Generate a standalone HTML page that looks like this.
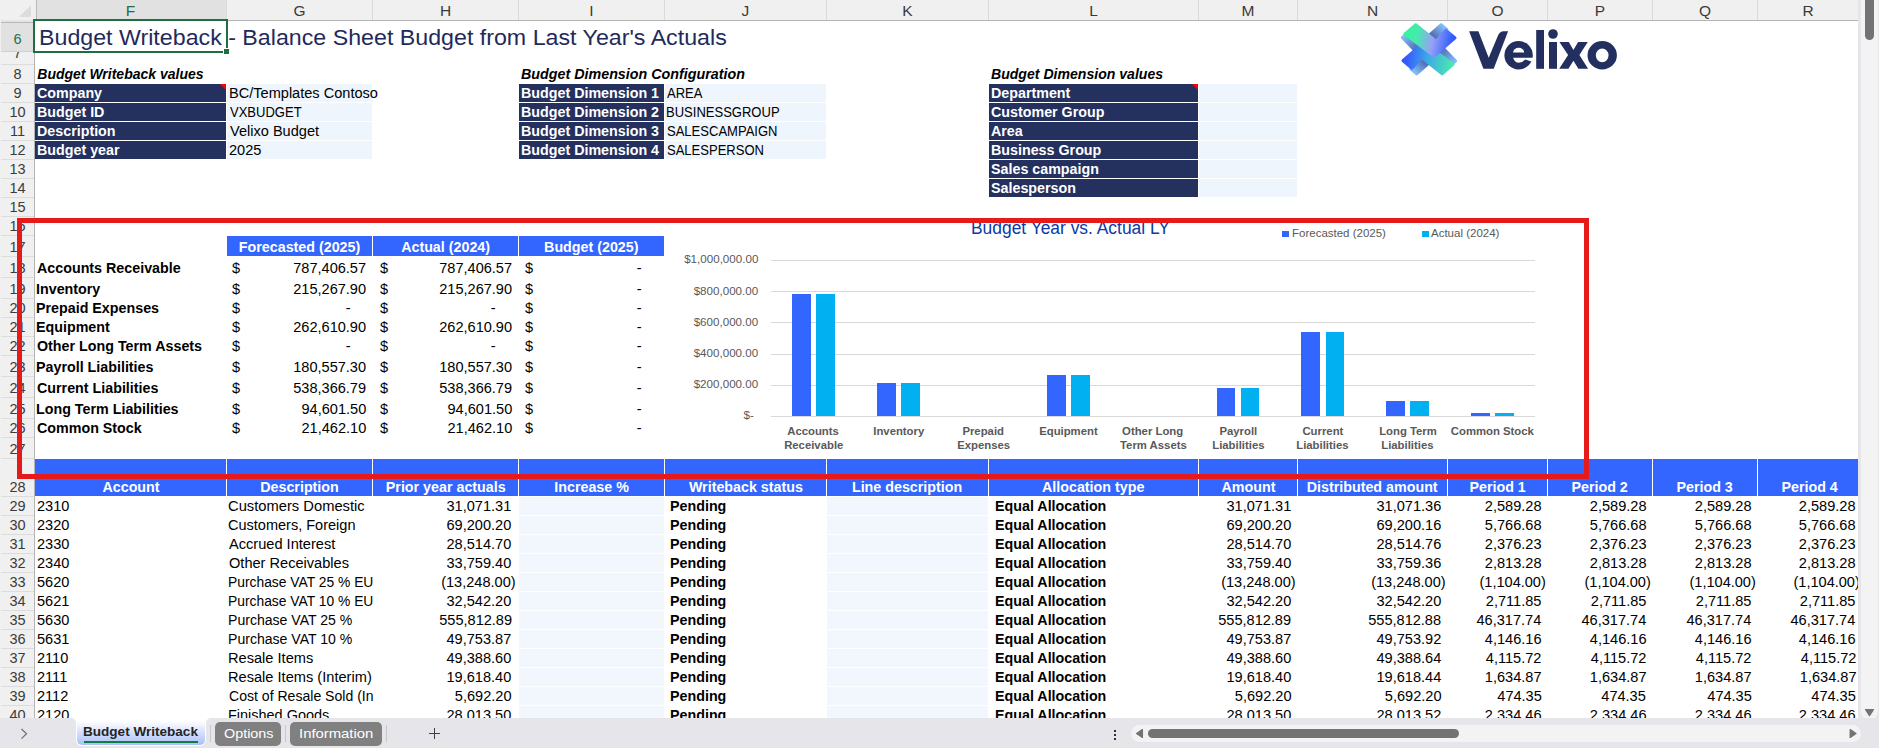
<!DOCTYPE html>
<html><head><meta charset="utf-8"><style>
html,body{margin:0;padding:0;}
body{width:1879px;height:748px;overflow:hidden;position:relative;background:#fff;font-family:"Liberation Sans",sans-serif;}
body div,body svg{position:absolute;white-space:pre;box-sizing:content-box;}
</style></head><body>
<div style="left:38.74px;top:25.70px;font-size:22.8px;line-height:22.8px;color:#1f2a5c;transform:scaleX(1.0180);transform-origin:left;">Budget Writeback - Balance Sheet Budget from Last Year's Actuals</div>
<div style="left:37.29px;top:66.95px;font-size:14px;line-height:14px;color:#000;font-weight:bold;font-style:italic;">Budget Writeback values</div>
<div style="left:521.19px;top:66.95px;font-size:14px;line-height:14px;color:#000;font-weight:bold;font-style:italic;transform:scaleX(1.0209);transform-origin:left;">Budget Dimension Configuration</div>
<div style="left:991.39px;top:66.95px;font-size:14px;line-height:14px;color:#000;font-weight:bold;font-style:italic;transform:scaleX(1.0056);transform-origin:left;">Budget Dimension values</div>
<div style="left:35px;top:84px;width:191px;height:18px;background:#24305e;"></div>
<div style="left:227px;top:84px;width:145px;height:18px;background:#eef5fd;"></div>
<div style="left:37.13px;top:85.95px;font-size:14px;line-height:14px;color:#fff;font-weight:bold;transform:scaleX(1.0200);transform-origin:left;">Company</div>
<div style="left:228.64px;top:85.95px;font-size:14px;line-height:14px;color:#000;transform:scaleX(1.0400);transform-origin:left;">BC/Templates Contoso</div>
<div style="left:35px;top:103px;width:191px;height:18px;background:#24305e;"></div>
<div style="left:227px;top:103px;width:145px;height:18px;background:#eef5fd;"></div>
<div style="left:36.77px;top:104.95px;font-size:14px;line-height:14px;color:#fff;font-weight:bold;transform:scaleX(1.0200);transform-origin:left;">Budget ID</div>
<div style="left:229.73px;top:104.95px;font-size:14px;line-height:14px;color:#000;transform:scaleX(0.9300);transform-origin:left;">VXBUDGET</div>
<div style="left:35px;top:122px;width:191px;height:18px;background:#24305e;"></div>
<div style="left:227px;top:122px;width:145px;height:18px;background:#eef5fd;"></div>
<div style="left:36.77px;top:123.95px;font-size:14px;line-height:14px;color:#fff;font-weight:bold;transform:scaleX(1.0200);transform-origin:left;">Description</div>
<div style="left:229.73px;top:123.95px;font-size:14px;line-height:14px;color:#000;transform:scaleX(1.0400);transform-origin:left;">Velixo Budget</div>
<div style="left:35px;top:141px;width:191px;height:18px;background:#24305e;"></div>
<div style="left:227px;top:141px;width:145px;height:18px;background:#eef5fd;"></div>
<div style="left:36.77px;top:142.95px;font-size:14px;line-height:14px;color:#fff;font-weight:bold;transform:scaleX(1.0200);transform-origin:left;">Budget year</div>
<div style="left:229.07px;top:142.95px;font-size:14px;line-height:14px;color:#000;transform:scaleX(1.0400);transform-origin:left;">2025</div>
<div style="left:519px;top:84px;width:145px;height:18px;background:#24305e;"></div>
<div style="left:665px;top:84px;width:161px;height:18px;background:#eef5fd;"></div>
<div style="left:521.07px;top:85.95px;font-size:14px;line-height:14px;color:#fff;font-weight:bold;transform:scaleX(1.0200);transform-origin:left;">Budget Dimension 1</div>
<div style="left:667.20px;top:85.95px;font-size:14px;line-height:14px;color:#000;transform:scaleX(0.9300);transform-origin:left;">AREA</div>
<div style="left:519px;top:103px;width:145px;height:18px;background:#24305e;"></div>
<div style="left:665px;top:103px;width:161px;height:18px;background:#eef5fd;"></div>
<div style="left:521.07px;top:104.95px;font-size:14px;line-height:14px;color:#fff;font-weight:bold;transform:scaleX(1.0200);transform-origin:left;">Budget Dimension 2</div>
<div style="left:666.16px;top:104.95px;font-size:14px;line-height:14px;color:#000;transform:scaleX(0.9300);transform-origin:left;">BUSINESSGROUP</div>
<div style="left:519px;top:122px;width:145px;height:18px;background:#24305e;"></div>
<div style="left:665px;top:122px;width:161px;height:18px;background:#eef5fd;"></div>
<div style="left:521.07px;top:123.95px;font-size:14px;line-height:14px;color:#fff;font-weight:bold;transform:scaleX(1.0200);transform-origin:left;">Budget Dimension 3</div>
<div style="left:666.61px;top:123.95px;font-size:14px;line-height:14px;color:#000;transform:scaleX(0.9300);transform-origin:left;">SALESCAMPAIGN</div>
<div style="left:519px;top:141px;width:145px;height:18px;background:#24305e;"></div>
<div style="left:665px;top:141px;width:161px;height:18px;background:#eef5fd;"></div>
<div style="left:521.07px;top:142.95px;font-size:14px;line-height:14px;color:#fff;font-weight:bold;transform:scaleX(1.0200);transform-origin:left;">Budget Dimension 4</div>
<div style="left:666.61px;top:142.95px;font-size:14px;line-height:14px;color:#000;transform:scaleX(0.9300);transform-origin:left;">SALESPERSON</div>
<div style="left:989px;top:84px;width:209px;height:18px;background:#24305e;"></div>
<div style="left:1199px;top:84px;width:98px;height:18px;background:#eef5fd;"></div>
<div style="left:990.57px;top:85.95px;font-size:14px;line-height:14px;color:#fff;font-weight:bold;transform:scaleX(1.0200);transform-origin:left;">Department</div>
<div style="left:989px;top:103px;width:209px;height:18px;background:#24305e;"></div>
<div style="left:1199px;top:103px;width:98px;height:18px;background:#eef5fd;"></div>
<div style="left:990.93px;top:104.95px;font-size:14px;line-height:14px;color:#fff;font-weight:bold;transform:scaleX(1.0200);transform-origin:left;">Customer Group</div>
<div style="left:989px;top:122px;width:209px;height:18px;background:#24305e;"></div>
<div style="left:1199px;top:122px;width:98px;height:18px;background:#eef5fd;"></div>
<div style="left:991.14px;top:123.95px;font-size:14px;line-height:14px;color:#fff;font-weight:bold;transform:scaleX(1.0200);transform-origin:left;">Area</div>
<div style="left:989px;top:141px;width:209px;height:18px;background:#24305e;"></div>
<div style="left:1199px;top:141px;width:98px;height:18px;background:#eef5fd;"></div>
<div style="left:990.57px;top:142.95px;font-size:14px;line-height:14px;color:#fff;font-weight:bold;transform:scaleX(1.0200);transform-origin:left;">Business Group</div>
<div style="left:989px;top:160px;width:209px;height:18px;background:#24305e;"></div>
<div style="left:1199px;top:160px;width:98px;height:18px;background:#eef5fd;"></div>
<div style="left:991.07px;top:161.95px;font-size:14px;line-height:14px;color:#fff;font-weight:bold;transform:scaleX(1.0200);transform-origin:left;">Sales campaign</div>
<div style="left:989px;top:179px;width:209px;height:18px;background:#24305e;"></div>
<div style="left:1199px;top:179px;width:98px;height:18px;background:#eef5fd;"></div>
<div style="left:991.07px;top:180.95px;font-size:14px;line-height:14px;color:#fff;font-weight:bold;transform:scaleX(1.0200);transform-origin:left;">Salesperson</div>
<div style="left:220px;top:84px;width:0;height:0;border-top:6px solid #ff0000;border-left:6px solid transparent"></div>
<div style="left:1192px;top:84px;width:0;height:0;border-top:6px solid #ff0000;border-left:6px solid transparent"></div>
<div style="left:227px;top:236px;width:145px;height:20px;background:#3366ff;"></div>
<div style="left:239.97px;top:239.95px;font-size:14px;line-height:14px;color:#fff;font-weight:bold;transform:scaleX(1.0200);transform-origin:center;">Forecasted (2025)</div>
<div style="left:373px;top:236px;width:145px;height:20px;background:#3366ff;"></div>
<div style="left:401.93px;top:239.95px;font-size:14px;line-height:14px;color:#fff;font-weight:bold;transform:scaleX(1.0200);transform-origin:center;">Actual (2024)</div>
<div style="left:519px;top:236px;width:145px;height:20px;background:#3366ff;"></div>
<div style="left:545.21px;top:239.95px;font-size:14px;line-height:14px;color:#fff;font-weight:bold;transform:scaleX(1.0200);transform-origin:center;">Budget (2025)</div>
<div style="left:36.94px;top:260.95px;font-size:14px;line-height:14px;color:#000;font-weight:bold;transform:scaleX(1.0200);transform-origin:left;">Accounts Receivable</div>
<div style="left:232.45px;top:260.95px;font-size:14px;line-height:14px;color:#000;transform:scaleX(1.0400);transform-origin:left;">$</div>
<div style="left:296.26px;top:260.95px;font-size:14px;line-height:14px;color:#000;transform:scaleX(1.0400);transform-origin:right;">787,406.57</div>
<div style="left:379.85px;top:260.95px;font-size:14px;line-height:14px;color:#000;transform:scaleX(1.0400);transform-origin:left;">$</div>
<div style="left:442.16px;top:260.95px;font-size:14px;line-height:14px;color:#000;transform:scaleX(1.0400);transform-origin:right;">787,406.57</div>
<div style="left:525.15px;top:260.95px;font-size:14px;line-height:14px;color:#000;transform:scaleX(1.0400);transform-origin:left;">$</div>
<div style="left:637.46px;top:260.95px;font-size:14px;line-height:14px;color:#000;transform:scaleX(1.0400);transform-origin:right;">-</div>
<div style="left:36.37px;top:281.95px;font-size:14px;line-height:14px;color:#000;font-weight:bold;transform:scaleX(1.0200);transform-origin:left;">Inventory</div>
<div style="left:232.45px;top:281.95px;font-size:14px;line-height:14px;color:#000;transform:scaleX(1.0400);transform-origin:left;">$</div>
<div style="left:296.04px;top:281.95px;font-size:14px;line-height:14px;color:#000;transform:scaleX(1.0400);transform-origin:right;">215,267.90</div>
<div style="left:379.85px;top:281.95px;font-size:14px;line-height:14px;color:#000;transform:scaleX(1.0400);transform-origin:left;">$</div>
<div style="left:441.94px;top:281.95px;font-size:14px;line-height:14px;color:#000;transform:scaleX(1.0400);transform-origin:right;">215,267.90</div>
<div style="left:525.15px;top:281.95px;font-size:14px;line-height:14px;color:#000;transform:scaleX(1.0400);transform-origin:left;">$</div>
<div style="left:637.46px;top:281.95px;font-size:14px;line-height:14px;color:#000;transform:scaleX(1.0400);transform-origin:right;">-</div>
<div style="left:36.37px;top:300.95px;font-size:14px;line-height:14px;color:#000;font-weight:bold;transform:scaleX(1.0200);transform-origin:left;">Prepaid Expenses</div>
<div style="left:232.45px;top:300.95px;font-size:14px;line-height:14px;color:#000;transform:scaleX(1.0400);transform-origin:left;">$</div>
<div style="left:345.56px;top:300.95px;font-size:14px;line-height:14px;color:#000;transform:scaleX(1.0400);transform-origin:right;">-</div>
<div style="left:379.85px;top:300.95px;font-size:14px;line-height:14px;color:#000;transform:scaleX(1.0400);transform-origin:left;">$</div>
<div style="left:491.46px;top:300.95px;font-size:14px;line-height:14px;color:#000;transform:scaleX(1.0400);transform-origin:right;">-</div>
<div style="left:525.15px;top:300.95px;font-size:14px;line-height:14px;color:#000;transform:scaleX(1.0400);transform-origin:left;">$</div>
<div style="left:637.46px;top:300.95px;font-size:14px;line-height:14px;color:#000;transform:scaleX(1.0400);transform-origin:right;">-</div>
<div style="left:36.37px;top:319.95px;font-size:14px;line-height:14px;color:#000;font-weight:bold;transform:scaleX(1.0200);transform-origin:left;">Equipment</div>
<div style="left:232.45px;top:319.95px;font-size:14px;line-height:14px;color:#000;transform:scaleX(1.0400);transform-origin:left;">$</div>
<div style="left:296.04px;top:319.95px;font-size:14px;line-height:14px;color:#000;transform:scaleX(1.0400);transform-origin:right;">262,610.90</div>
<div style="left:379.85px;top:319.95px;font-size:14px;line-height:14px;color:#000;transform:scaleX(1.0400);transform-origin:left;">$</div>
<div style="left:441.94px;top:319.95px;font-size:14px;line-height:14px;color:#000;transform:scaleX(1.0400);transform-origin:right;">262,610.90</div>
<div style="left:525.15px;top:319.95px;font-size:14px;line-height:14px;color:#000;transform:scaleX(1.0400);transform-origin:left;">$</div>
<div style="left:637.46px;top:319.95px;font-size:14px;line-height:14px;color:#000;transform:scaleX(1.0400);transform-origin:right;">-</div>
<div style="left:36.73px;top:338.95px;font-size:14px;line-height:14px;color:#000;font-weight:bold;transform:scaleX(1.0200);transform-origin:left;">Other Long Term Assets</div>
<div style="left:232.45px;top:338.95px;font-size:14px;line-height:14px;color:#000;transform:scaleX(1.0400);transform-origin:left;">$</div>
<div style="left:345.56px;top:338.95px;font-size:14px;line-height:14px;color:#000;transform:scaleX(1.0400);transform-origin:right;">-</div>
<div style="left:379.85px;top:338.95px;font-size:14px;line-height:14px;color:#000;transform:scaleX(1.0400);transform-origin:left;">$</div>
<div style="left:491.46px;top:338.95px;font-size:14px;line-height:14px;color:#000;transform:scaleX(1.0400);transform-origin:right;">-</div>
<div style="left:525.15px;top:338.95px;font-size:14px;line-height:14px;color:#000;transform:scaleX(1.0400);transform-origin:left;">$</div>
<div style="left:637.46px;top:338.95px;font-size:14px;line-height:14px;color:#000;transform:scaleX(1.0400);transform-origin:right;">-</div>
<div style="left:36.37px;top:359.95px;font-size:14px;line-height:14px;color:#000;font-weight:bold;transform:scaleX(1.0200);transform-origin:left;">Payroll Liabilities</div>
<div style="left:232.45px;top:359.95px;font-size:14px;line-height:14px;color:#000;transform:scaleX(1.0400);transform-origin:left;">$</div>
<div style="left:296.04px;top:359.95px;font-size:14px;line-height:14px;color:#000;transform:scaleX(1.0400);transform-origin:right;">180,557.30</div>
<div style="left:379.85px;top:359.95px;font-size:14px;line-height:14px;color:#000;transform:scaleX(1.0400);transform-origin:left;">$</div>
<div style="left:441.94px;top:359.95px;font-size:14px;line-height:14px;color:#000;transform:scaleX(1.0400);transform-origin:right;">180,557.30</div>
<div style="left:525.15px;top:359.95px;font-size:14px;line-height:14px;color:#000;transform:scaleX(1.0400);transform-origin:left;">$</div>
<div style="left:637.46px;top:359.95px;font-size:14px;line-height:14px;color:#000;transform:scaleX(1.0400);transform-origin:right;">-</div>
<div style="left:36.73px;top:380.95px;font-size:14px;line-height:14px;color:#000;font-weight:bold;transform:scaleX(1.0200);transform-origin:left;">Current Liabilities</div>
<div style="left:232.45px;top:380.95px;font-size:14px;line-height:14px;color:#000;transform:scaleX(1.0400);transform-origin:left;">$</div>
<div style="left:296.19px;top:380.95px;font-size:14px;line-height:14px;color:#000;transform:scaleX(1.0400);transform-origin:right;">538,366.79</div>
<div style="left:379.85px;top:380.95px;font-size:14px;line-height:14px;color:#000;transform:scaleX(1.0400);transform-origin:left;">$</div>
<div style="left:442.09px;top:380.95px;font-size:14px;line-height:14px;color:#000;transform:scaleX(1.0400);transform-origin:right;">538,366.79</div>
<div style="left:525.15px;top:380.95px;font-size:14px;line-height:14px;color:#000;transform:scaleX(1.0400);transform-origin:left;">$</div>
<div style="left:637.46px;top:380.95px;font-size:14px;line-height:14px;color:#000;transform:scaleX(1.0400);transform-origin:right;">-</div>
<div style="left:36.37px;top:401.95px;font-size:14px;line-height:14px;color:#000;font-weight:bold;transform:scaleX(1.0200);transform-origin:left;">Long Term Liabilities</div>
<div style="left:232.45px;top:401.95px;font-size:14px;line-height:14px;color:#000;transform:scaleX(1.0400);transform-origin:left;">$</div>
<div style="left:303.81px;top:401.95px;font-size:14px;line-height:14px;color:#000;transform:scaleX(1.0400);transform-origin:right;">94,601.50</div>
<div style="left:379.85px;top:401.95px;font-size:14px;line-height:14px;color:#000;transform:scaleX(1.0400);transform-origin:left;">$</div>
<div style="left:449.71px;top:401.95px;font-size:14px;line-height:14px;color:#000;transform:scaleX(1.0400);transform-origin:right;">94,601.50</div>
<div style="left:525.15px;top:401.95px;font-size:14px;line-height:14px;color:#000;transform:scaleX(1.0400);transform-origin:left;">$</div>
<div style="left:637.46px;top:401.95px;font-size:14px;line-height:14px;color:#000;transform:scaleX(1.0400);transform-origin:right;">-</div>
<div style="left:36.73px;top:420.95px;font-size:14px;line-height:14px;color:#000;font-weight:bold;transform:scaleX(1.0200);transform-origin:left;">Common Stock</div>
<div style="left:232.45px;top:420.95px;font-size:14px;line-height:14px;color:#000;transform:scaleX(1.0400);transform-origin:left;">$</div>
<div style="left:303.81px;top:420.95px;font-size:14px;line-height:14px;color:#000;transform:scaleX(1.0400);transform-origin:right;">21,462.10</div>
<div style="left:379.85px;top:420.95px;font-size:14px;line-height:14px;color:#000;transform:scaleX(1.0400);transform-origin:left;">$</div>
<div style="left:449.71px;top:420.95px;font-size:14px;line-height:14px;color:#000;transform:scaleX(1.0400);transform-origin:right;">21,462.10</div>
<div style="left:525.15px;top:420.95px;font-size:14px;line-height:14px;color:#000;transform:scaleX(1.0400);transform-origin:left;">$</div>
<div style="left:637.46px;top:420.95px;font-size:14px;line-height:14px;color:#000;transform:scaleX(1.0400);transform-origin:right;">-</div>
<div style="left:771px;top:416px;width:764px;height:1px;background:#d9d9d9;"></div>
<div style="left:771px;top:385px;width:764px;height:1px;background:#d9d9d9;"></div>
<div style="left:771px;top:354px;width:764px;height:1px;background:#d9d9d9;"></div>
<div style="left:771px;top:322px;width:764px;height:1px;background:#d9d9d9;"></div>
<div style="left:771px;top:291px;width:764px;height:1px;background:#d9d9d9;"></div>
<div style="left:771px;top:260px;width:764px;height:1px;background:#d9d9d9;"></div>
<div style="left:743.73px;top:410.49px;font-size:11px;line-height:11px;color:#595959;transform:scaleX(1.0550);transform-origin:right;">$-</div>
<div style="left:697.05px;top:379.29px;font-size:11px;line-height:11px;color:#595959;transform:scaleX(1.0550);transform-origin:right;">$200,000.00</div>
<div style="left:697.05px;top:348.09px;font-size:11px;line-height:11px;color:#595959;transform:scaleX(1.0550);transform-origin:right;">$400,000.00</div>
<div style="left:697.05px;top:316.89px;font-size:11px;line-height:11px;color:#595959;transform:scaleX(1.0550);transform-origin:right;">$600,000.00</div>
<div style="left:697.05px;top:285.69px;font-size:11px;line-height:11px;color:#595959;transform:scaleX(1.0550);transform-origin:right;">$800,000.00</div>
<div style="left:687.86px;top:254.49px;font-size:11px;line-height:11px;color:#595959;transform:scaleX(1.0550);transform-origin:right;">$1,000,000.00</div>
<div style="left:792.20px;top:293.76px;width:18.7px;height:122.44px;background:#3366ff"></div>
<div style="left:816.30px;top:293.76px;width:18.7px;height:122.44px;background:#00b0f0"></div>
<div style="left:877.08px;top:382.73px;width:18.7px;height:33.47px;background:#3366ff"></div>
<div style="left:901.17px;top:382.73px;width:18.7px;height:33.47px;background:#00b0f0"></div>
<div style="left:1046.83px;top:375.36px;width:18.7px;height:40.84px;background:#3366ff"></div>
<div style="left:1070.92px;top:375.36px;width:18.7px;height:40.84px;background:#00b0f0"></div>
<div style="left:1216.58px;top:388.12px;width:18.7px;height:28.08px;background:#3366ff"></div>
<div style="left:1240.67px;top:388.12px;width:18.7px;height:28.08px;background:#00b0f0"></div>
<div style="left:1301.45px;top:332.48px;width:18.7px;height:83.72px;background:#3366ff"></div>
<div style="left:1325.55px;top:332.48px;width:18.7px;height:83.72px;background:#00b0f0"></div>
<div style="left:1386.33px;top:401.49px;width:18.7px;height:14.71px;background:#3366ff"></div>
<div style="left:1410.42px;top:401.49px;width:18.7px;height:14.71px;background:#00b0f0"></div>
<div style="left:1471.20px;top:412.86px;width:18.7px;height:3.34px;background:#3366ff"></div>
<div style="left:1495.30px;top:412.86px;width:18.7px;height:3.34px;background:#00b0f0"></div>
<div style="left:788.44px;top:425.79px;font-size:11px;line-height:11px;color:#595959;font-weight:bold;transform:scaleX(1.0300);transform-origin:center;">Accounts</div>
<div style="left:784.76px;top:439.79px;font-size:11px;line-height:11px;color:#595959;font-weight:bold;transform:scaleX(1.0300);transform-origin:center;">Receivable</div>
<div style="left:873.62px;top:425.79px;font-size:11px;line-height:11px;color:#595959;font-weight:bold;transform:scaleX(1.0300);transform-origin:center;">Inventory</div>
<div style="left:963.08px;top:425.79px;font-size:11px;line-height:11px;color:#595959;font-weight:bold;transform:scaleX(1.0300);transform-origin:center;">Prepaid</div>
<div style="left:957.57px;top:439.79px;font-size:11px;line-height:11px;color:#595959;font-weight:bold;transform:scaleX(1.0300);transform-origin:center;">Expenses</div>
<div style="left:1039.71px;top:425.79px;font-size:11px;line-height:11px;color:#595959;font-weight:bold;transform:scaleX(1.0300);transform-origin:center;">Equipment</div>
<div style="left:1123.36px;top:425.79px;font-size:11px;line-height:11px;color:#595959;font-weight:bold;transform:scaleX(1.0300);transform-origin:center;">Other Long</div>
<div style="left:1120.60px;top:439.79px;font-size:11px;line-height:11px;color:#595959;font-weight:bold;transform:scaleX(1.0300);transform-origin:center;">Term Assets</div>
<div style="left:1219.53px;top:425.79px;font-size:11px;line-height:11px;color:#595959;font-weight:bold;transform:scaleX(1.0300);transform-origin:center;">Payroll</div>
<div style="left:1212.51px;top:439.79px;font-size:11px;line-height:11px;color:#595959;font-weight:bold;transform:scaleX(1.0300);transform-origin:center;">Liabilities</div>
<div style="left:1302.89px;top:425.79px;font-size:11px;line-height:11px;color:#595959;font-weight:bold;transform:scaleX(1.0300);transform-origin:center;">Current</div>
<div style="left:1297.38px;top:439.79px;font-size:11px;line-height:11px;color:#595959;font-weight:bold;transform:scaleX(1.0300);transform-origin:center;">Liabilities</div>
<div style="left:1379.62px;top:425.79px;font-size:11px;line-height:11px;color:#595959;font-weight:bold;transform:scaleX(1.0300);transform-origin:center;">Long Term</div>
<div style="left:1382.26px;top:439.79px;font-size:11px;line-height:11px;color:#595959;font-weight:bold;transform:scaleX(1.0300);transform-origin:center;">Liabilities</div>
<div style="left:1452.16px;top:425.79px;font-size:11px;line-height:11px;color:#595959;font-weight:bold;transform:scaleX(1.0300);transform-origin:center;">Common Stock</div>
<div style="left:970.81px;top:218.56px;font-size:18px;line-height:18px;color:#0b3aa8;transform:scaleX(0.9665);transform-origin:left;">Budget Year vs. Actual LY</div>
<div style="left:1282px;top:231px;width:7px;height:6px;background:#3366ff;"></div>
<div style="left:1422px;top:231px;width:7px;height:6px;background:#00b0f0;"></div>
<div style="left:1291.78px;top:227.99px;font-size:11px;line-height:11px;color:#595959;transform:scaleX(1.0449);transform-origin:left;">Forecasted (2025)</div>
<div style="left:1431.20px;top:227.99px;font-size:11px;line-height:11px;color:#595959;transform:scaleX(1.0458);transform-origin:left;">Actual (2024)</div>
<div style="left:35px;top:459px;width:1823px;height:37px;background:#3366ff;"></div>
<div style="left:226px;top:459px;width:1px;height:37px;background:#ffffff;"></div>
<div style="left:372px;top:459px;width:1px;height:37px;background:#ffffff;"></div>
<div style="left:518px;top:459px;width:1px;height:37px;background:#ffffff;"></div>
<div style="left:664px;top:459px;width:1px;height:37px;background:#ffffff;"></div>
<div style="left:826px;top:459px;width:1px;height:37px;background:#ffffff;"></div>
<div style="left:988px;top:459px;width:1px;height:37px;background:#ffffff;"></div>
<div style="left:1198px;top:459px;width:1px;height:37px;background:#ffffff;"></div>
<div style="left:1297px;top:459px;width:1px;height:37px;background:#ffffff;"></div>
<div style="left:1447px;top:459px;width:1px;height:37px;background:#ffffff;"></div>
<div style="left:1547px;top:459px;width:1px;height:37px;background:#ffffff;"></div>
<div style="left:1652px;top:459px;width:1px;height:37px;background:#ffffff;"></div>
<div style="left:1757px;top:459px;width:1px;height:37px;background:#ffffff;"></div>
<div style="left:102.50px;top:479.95px;font-size:14px;line-height:14px;color:#fff;font-weight:bold;transform:scaleX(1.0200);transform-origin:center;">Account</div>
<div style="left:260.99px;top:479.95px;font-size:14px;line-height:14px;color:#fff;font-weight:bold;transform:scaleX(1.0200);transform-origin:center;">Description</div>
<div style="left:386.74px;top:479.95px;font-size:14px;line-height:14px;color:#fff;font-weight:bold;transform:scaleX(1.0200);transform-origin:center;">Prior year actuals</div>
<div style="left:554.92px;top:479.95px;font-size:14px;line-height:14px;color:#fff;font-weight:bold;transform:scaleX(1.0200);transform-origin:center;">Increase %</div>
<div style="left:689.61px;top:479.95px;font-size:14px;line-height:14px;color:#fff;font-weight:bold;transform:scaleX(1.0200);transform-origin:center;">Writeback status</div>
<div style="left:853.44px;top:479.95px;font-size:14px;line-height:14px;color:#fff;font-weight:bold;transform:scaleX(1.0200);transform-origin:center;">Line description</div>
<div style="left:1043.33px;top:479.95px;font-size:14px;line-height:14px;color:#fff;font-weight:bold;transform:scaleX(1.0200);transform-origin:center;">Allocation type</div>
<div style="left:1221.56px;top:479.95px;font-size:14px;line-height:14px;color:#fff;font-weight:bold;transform:scaleX(1.0200);transform-origin:center;">Amount</div>
<div style="left:1308.33px;top:479.95px;font-size:14px;line-height:14px;color:#fff;font-weight:bold;transform:scaleX(1.0200);transform-origin:center;">Distributed amount</div>
<div style="left:1469.88px;top:479.95px;font-size:14px;line-height:14px;color:#fff;font-weight:bold;transform:scaleX(1.0200);transform-origin:center;">Period 1</div>
<div style="left:1572.38px;top:479.95px;font-size:14px;line-height:14px;color:#fff;font-weight:bold;transform:scaleX(1.0200);transform-origin:center;">Period 2</div>
<div style="left:1677.38px;top:479.95px;font-size:14px;line-height:14px;color:#fff;font-weight:bold;transform:scaleX(1.0200);transform-origin:center;">Period 3</div>
<div style="left:1782.38px;top:479.95px;font-size:14px;line-height:14px;color:#fff;font-weight:bold;transform:scaleX(1.0200);transform-origin:center;">Period 4</div>
<div style="left:519px;top:497px;width:145px;height:18px;background:#f2f7fe;"></div>
<div style="left:827px;top:497px;width:161px;height:18px;background:#f2f7fe;"></div>
<div style="left:36.57px;top:498.95px;font-size:14px;line-height:14px;color:#000;transform:scaleX(1.0400);transform-origin:left;">2310</div>
<div style="left:228.46px;top:498.95px;font-size:14px;line-height:14px;color:#000;transform:scaleX(1.0522);transform-origin:left;">Customers Domestic</div>
<div style="left:449.35px;top:498.95px;font-size:14px;line-height:14px;color:#000;transform:scaleX(1.0400);transform-origin:right;">31,071.31</div>
<div style="left:670.27px;top:498.95px;font-size:14px;line-height:14px;color:#000;font-weight:bold;transform:scaleX(1.0200);transform-origin:left;">Pending</div>
<div style="left:995.07px;top:498.95px;font-size:14px;line-height:14px;color:#000;font-weight:bold;transform:scaleX(1.0200);transform-origin:left;">Equal Allocation</div>
<div style="left:1229.05px;top:498.95px;font-size:14px;line-height:14px;color:#000;transform:scaleX(1.0400);transform-origin:right;">31,071.31</div>
<div style="left:1378.78px;top:498.95px;font-size:14px;line-height:14px;color:#000;transform:scaleX(1.0400);transform-origin:right;">31,071.36</div>
<div style="left:1487.12px;top:498.95px;font-size:14px;line-height:14px;color:#000;transform:scaleX(1.0400);transform-origin:right;">2,589.28</div>
<div style="left:1591.62px;top:498.95px;font-size:14px;line-height:14px;color:#000;transform:scaleX(1.0400);transform-origin:right;">2,589.28</div>
<div style="left:1696.92px;top:498.95px;font-size:14px;line-height:14px;color:#000;transform:scaleX(1.0400);transform-origin:right;">2,589.28</div>
<div style="left:1801.42px;top:498.95px;font-size:14px;line-height:14px;color:#000;transform:scaleX(1.0400);transform-origin:right;">2,589.28</div>
<div style="left:519px;top:516px;width:145px;height:18px;background:#f2f7fe;"></div>
<div style="left:827px;top:516px;width:161px;height:18px;background:#f2f7fe;"></div>
<div style="left:36.57px;top:517.95px;font-size:14px;line-height:14px;color:#000;transform:scaleX(1.0400);transform-origin:left;">2320</div>
<div style="left:228.47px;top:517.95px;font-size:14px;line-height:14px;color:#000;transform:scaleX(1.0370);transform-origin:left;">Customers, Foreign</div>
<div style="left:449.21px;top:517.95px;font-size:14px;line-height:14px;color:#000;transform:scaleX(1.0400);transform-origin:right;">69,200.20</div>
<div style="left:670.27px;top:517.95px;font-size:14px;line-height:14px;color:#000;font-weight:bold;transform:scaleX(1.0200);transform-origin:left;">Pending</div>
<div style="left:995.07px;top:517.95px;font-size:14px;line-height:14px;color:#000;font-weight:bold;transform:scaleX(1.0200);transform-origin:left;">Equal Allocation</div>
<div style="left:1228.91px;top:517.95px;font-size:14px;line-height:14px;color:#000;transform:scaleX(1.0400);transform-origin:right;">69,200.20</div>
<div style="left:1378.78px;top:517.95px;font-size:14px;line-height:14px;color:#000;transform:scaleX(1.0400);transform-origin:right;">69,200.16</div>
<div style="left:1487.12px;top:517.95px;font-size:14px;line-height:14px;color:#000;transform:scaleX(1.0400);transform-origin:right;">5,766.68</div>
<div style="left:1591.62px;top:517.95px;font-size:14px;line-height:14px;color:#000;transform:scaleX(1.0400);transform-origin:right;">5,766.68</div>
<div style="left:1696.92px;top:517.95px;font-size:14px;line-height:14px;color:#000;transform:scaleX(1.0400);transform-origin:right;">5,766.68</div>
<div style="left:1801.42px;top:517.95px;font-size:14px;line-height:14px;color:#000;transform:scaleX(1.0400);transform-origin:right;">5,766.68</div>
<div style="left:519px;top:535px;width:145px;height:18px;background:#f2f7fe;"></div>
<div style="left:827px;top:535px;width:161px;height:18px;background:#f2f7fe;"></div>
<div style="left:36.57px;top:536.95px;font-size:14px;line-height:14px;color:#000;transform:scaleX(1.0400);transform-origin:left;">2330</div>
<div style="left:229.20px;top:536.95px;font-size:14px;line-height:14px;color:#000;transform:scaleX(1.0427);transform-origin:left;">Accrued Interest</div>
<div style="left:449.21px;top:536.95px;font-size:14px;line-height:14px;color:#000;transform:scaleX(1.0400);transform-origin:right;">28,514.70</div>
<div style="left:670.27px;top:536.95px;font-size:14px;line-height:14px;color:#000;font-weight:bold;transform:scaleX(1.0200);transform-origin:left;">Pending</div>
<div style="left:995.07px;top:536.95px;font-size:14px;line-height:14px;color:#000;font-weight:bold;transform:scaleX(1.0200);transform-origin:left;">Equal Allocation</div>
<div style="left:1228.91px;top:536.95px;font-size:14px;line-height:14px;color:#000;transform:scaleX(1.0400);transform-origin:right;">28,514.70</div>
<div style="left:1378.78px;top:536.95px;font-size:14px;line-height:14px;color:#000;transform:scaleX(1.0400);transform-origin:right;">28,514.76</div>
<div style="left:1487.12px;top:536.95px;font-size:14px;line-height:14px;color:#000;transform:scaleX(1.0400);transform-origin:right;">2,376.23</div>
<div style="left:1591.62px;top:536.95px;font-size:14px;line-height:14px;color:#000;transform:scaleX(1.0400);transform-origin:right;">2,376.23</div>
<div style="left:1696.92px;top:536.95px;font-size:14px;line-height:14px;color:#000;transform:scaleX(1.0400);transform-origin:right;">2,376.23</div>
<div style="left:1801.42px;top:536.95px;font-size:14px;line-height:14px;color:#000;transform:scaleX(1.0400);transform-origin:right;">2,376.23</div>
<div style="left:519px;top:554px;width:145px;height:18px;background:#f2f7fe;"></div>
<div style="left:827px;top:554px;width:161px;height:18px;background:#f2f7fe;"></div>
<div style="left:36.57px;top:555.95px;font-size:14px;line-height:14px;color:#000;transform:scaleX(1.0400);transform-origin:left;">2340</div>
<div style="left:228.54px;top:555.95px;font-size:14px;line-height:14px;color:#000;transform:scaleX(1.0418);transform-origin:left;">Other Receivables</div>
<div style="left:449.21px;top:555.95px;font-size:14px;line-height:14px;color:#000;transform:scaleX(1.0400);transform-origin:right;">33,759.40</div>
<div style="left:670.27px;top:555.95px;font-size:14px;line-height:14px;color:#000;font-weight:bold;transform:scaleX(1.0200);transform-origin:left;">Pending</div>
<div style="left:995.07px;top:555.95px;font-size:14px;line-height:14px;color:#000;font-weight:bold;transform:scaleX(1.0200);transform-origin:left;">Equal Allocation</div>
<div style="left:1228.91px;top:555.95px;font-size:14px;line-height:14px;color:#000;transform:scaleX(1.0400);transform-origin:right;">33,759.40</div>
<div style="left:1378.78px;top:555.95px;font-size:14px;line-height:14px;color:#000;transform:scaleX(1.0400);transform-origin:right;">33,759.36</div>
<div style="left:1487.12px;top:555.95px;font-size:14px;line-height:14px;color:#000;transform:scaleX(1.0400);transform-origin:right;">2,813.28</div>
<div style="left:1591.62px;top:555.95px;font-size:14px;line-height:14px;color:#000;transform:scaleX(1.0400);transform-origin:right;">2,813.28</div>
<div style="left:1696.92px;top:555.95px;font-size:14px;line-height:14px;color:#000;transform:scaleX(1.0400);transform-origin:right;">2,813.28</div>
<div style="left:1801.42px;top:555.95px;font-size:14px;line-height:14px;color:#000;transform:scaleX(1.0400);transform-origin:right;">2,813.28</div>
<div style="left:519px;top:573px;width:145px;height:18px;background:#f2f7fe;"></div>
<div style="left:827px;top:573px;width:161px;height:18px;background:#f2f7fe;"></div>
<div style="left:36.72px;top:574.95px;font-size:14px;line-height:14px;color:#000;transform:scaleX(1.0400);transform-origin:left;">5620</div>
<div style="left:228.09px;top:574.95px;font-size:14px;line-height:14px;color:#000;transform:scaleX(0.9883);transform-origin:left;">Purchase VAT 25 % EU</div>
<div style="left:444.34px;top:574.95px;font-size:14px;line-height:14px;color:#000;transform:scaleX(1.0400);transform-origin:right;">(13,248.00)</div>
<div style="left:670.27px;top:574.95px;font-size:14px;line-height:14px;color:#000;font-weight:bold;transform:scaleX(1.0200);transform-origin:left;">Pending</div>
<div style="left:995.07px;top:574.95px;font-size:14px;line-height:14px;color:#000;font-weight:bold;transform:scaleX(1.0200);transform-origin:left;">Equal Allocation</div>
<div style="left:1224.04px;top:574.95px;font-size:14px;line-height:14px;color:#000;transform:scaleX(1.0400);transform-origin:right;">(13,248.00)</div>
<div style="left:1373.84px;top:574.95px;font-size:14px;line-height:14px;color:#000;transform:scaleX(1.0400);transform-origin:right;">(13,248.00)</div>
<div style="left:1482.11px;top:574.95px;font-size:14px;line-height:14px;color:#000;transform:scaleX(1.0400);transform-origin:right;">(1,104.00)</div>
<div style="left:1586.61px;top:574.95px;font-size:14px;line-height:14px;color:#000;transform:scaleX(1.0400);transform-origin:right;">(1,104.00)</div>
<div style="left:1691.91px;top:574.95px;font-size:14px;line-height:14px;color:#000;transform:scaleX(1.0400);transform-origin:right;">(1,104.00)</div>
<div style="left:1796.41px;top:574.95px;font-size:14px;line-height:14px;color:#000;transform:scaleX(1.0400);transform-origin:right;">(1,104.00)</div>
<div style="left:519px;top:592px;width:145px;height:18px;background:#f2f7fe;"></div>
<div style="left:827px;top:592px;width:161px;height:18px;background:#f2f7fe;"></div>
<div style="left:36.72px;top:593.95px;font-size:14px;line-height:14px;color:#000;transform:scaleX(1.0400);transform-origin:left;">5621</div>
<div style="left:228.09px;top:593.95px;font-size:14px;line-height:14px;color:#000;transform:scaleX(0.9883);transform-origin:left;">Purchase VAT 10 % EU</div>
<div style="left:449.21px;top:593.95px;font-size:14px;line-height:14px;color:#000;transform:scaleX(1.0400);transform-origin:right;">32,542.20</div>
<div style="left:670.27px;top:593.95px;font-size:14px;line-height:14px;color:#000;font-weight:bold;transform:scaleX(1.0200);transform-origin:left;">Pending</div>
<div style="left:995.07px;top:593.95px;font-size:14px;line-height:14px;color:#000;font-weight:bold;transform:scaleX(1.0200);transform-origin:left;">Equal Allocation</div>
<div style="left:1228.91px;top:593.95px;font-size:14px;line-height:14px;color:#000;transform:scaleX(1.0400);transform-origin:right;">32,542.20</div>
<div style="left:1378.71px;top:593.95px;font-size:14px;line-height:14px;color:#000;transform:scaleX(1.0400);transform-origin:right;">32,542.20</div>
<div style="left:1488.17px;top:593.95px;font-size:14px;line-height:14px;color:#000;transform:scaleX(1.0400);transform-origin:right;">2,711.85</div>
<div style="left:1592.67px;top:593.95px;font-size:14px;line-height:14px;color:#000;transform:scaleX(1.0400);transform-origin:right;">2,711.85</div>
<div style="left:1697.97px;top:593.95px;font-size:14px;line-height:14px;color:#000;transform:scaleX(1.0400);transform-origin:right;">2,711.85</div>
<div style="left:1802.47px;top:593.95px;font-size:14px;line-height:14px;color:#000;transform:scaleX(1.0400);transform-origin:right;">2,711.85</div>
<div style="left:519px;top:611px;width:145px;height:18px;background:#f2f7fe;"></div>
<div style="left:827px;top:611px;width:161px;height:18px;background:#f2f7fe;"></div>
<div style="left:36.72px;top:612.95px;font-size:14px;line-height:14px;color:#000;transform:scaleX(1.0400);transform-origin:left;">5630</div>
<div style="left:228.07px;top:612.95px;font-size:14px;line-height:14px;color:#000;transform:scaleX(1.0045);transform-origin:left;">Purchase VAT 25 %</div>
<div style="left:441.59px;top:612.95px;font-size:14px;line-height:14px;color:#000;transform:scaleX(1.0400);transform-origin:right;">555,812.89</div>
<div style="left:670.27px;top:612.95px;font-size:14px;line-height:14px;color:#000;font-weight:bold;transform:scaleX(1.0200);transform-origin:left;">Pending</div>
<div style="left:995.07px;top:612.95px;font-size:14px;line-height:14px;color:#000;font-weight:bold;transform:scaleX(1.0200);transform-origin:left;">Equal Allocation</div>
<div style="left:1221.29px;top:612.95px;font-size:14px;line-height:14px;color:#000;transform:scaleX(1.0400);transform-origin:right;">555,812.89</div>
<div style="left:1371.01px;top:612.95px;font-size:14px;line-height:14px;color:#000;transform:scaleX(1.0400);transform-origin:right;">555,812.88</div>
<div style="left:1479.06px;top:612.95px;font-size:14px;line-height:14px;color:#000;transform:scaleX(1.0400);transform-origin:right;">46,317.74</div>
<div style="left:1583.56px;top:612.95px;font-size:14px;line-height:14px;color:#000;transform:scaleX(1.0400);transform-origin:right;">46,317.74</div>
<div style="left:1688.86px;top:612.95px;font-size:14px;line-height:14px;color:#000;transform:scaleX(1.0400);transform-origin:right;">46,317.74</div>
<div style="left:1793.36px;top:612.95px;font-size:14px;line-height:14px;color:#000;transform:scaleX(1.0400);transform-origin:right;">46,317.74</div>
<div style="left:519px;top:630px;width:145px;height:18px;background:#f2f7fe;"></div>
<div style="left:827px;top:630px;width:161px;height:18px;background:#f2f7fe;"></div>
<div style="left:36.72px;top:631.95px;font-size:14px;line-height:14px;color:#000;transform:scaleX(1.0400);transform-origin:left;">5631</div>
<div style="left:228.07px;top:631.95px;font-size:14px;line-height:14px;color:#000;transform:scaleX(1.0045);transform-origin:left;">Purchase VAT 10 %</div>
<div style="left:449.43px;top:631.95px;font-size:14px;line-height:14px;color:#000;transform:scaleX(1.0400);transform-origin:right;">49,753.87</div>
<div style="left:670.27px;top:631.95px;font-size:14px;line-height:14px;color:#000;font-weight:bold;transform:scaleX(1.0200);transform-origin:left;">Pending</div>
<div style="left:995.07px;top:631.95px;font-size:14px;line-height:14px;color:#000;font-weight:bold;transform:scaleX(1.0200);transform-origin:left;">Equal Allocation</div>
<div style="left:1229.13px;top:631.95px;font-size:14px;line-height:14px;color:#000;transform:scaleX(1.0400);transform-origin:right;">49,753.87</div>
<div style="left:1378.93px;top:631.95px;font-size:14px;line-height:14px;color:#000;transform:scaleX(1.0400);transform-origin:right;">49,753.92</div>
<div style="left:1487.12px;top:631.95px;font-size:14px;line-height:14px;color:#000;transform:scaleX(1.0400);transform-origin:right;">4,146.16</div>
<div style="left:1591.62px;top:631.95px;font-size:14px;line-height:14px;color:#000;transform:scaleX(1.0400);transform-origin:right;">4,146.16</div>
<div style="left:1696.92px;top:631.95px;font-size:14px;line-height:14px;color:#000;transform:scaleX(1.0400);transform-origin:right;">4,146.16</div>
<div style="left:1801.42px;top:631.95px;font-size:14px;line-height:14px;color:#000;transform:scaleX(1.0400);transform-origin:right;">4,146.16</div>
<div style="left:519px;top:649px;width:145px;height:18px;background:#f2f7fe;"></div>
<div style="left:827px;top:649px;width:161px;height:18px;background:#f2f7fe;"></div>
<div style="left:36.57px;top:650.95px;font-size:14px;line-height:14px;color:#000;transform:scaleX(1.0400);transform-origin:left;">2110</div>
<div style="left:228.03px;top:650.95px;font-size:14px;line-height:14px;color:#000;transform:scaleX(1.0440);transform-origin:left;">Resale Items</div>
<div style="left:449.21px;top:650.95px;font-size:14px;line-height:14px;color:#000;transform:scaleX(1.0400);transform-origin:right;">49,388.60</div>
<div style="left:670.27px;top:650.95px;font-size:14px;line-height:14px;color:#000;font-weight:bold;transform:scaleX(1.0200);transform-origin:left;">Pending</div>
<div style="left:995.07px;top:650.95px;font-size:14px;line-height:14px;color:#000;font-weight:bold;transform:scaleX(1.0200);transform-origin:left;">Equal Allocation</div>
<div style="left:1228.91px;top:650.95px;font-size:14px;line-height:14px;color:#000;transform:scaleX(1.0400);transform-origin:right;">49,388.60</div>
<div style="left:1378.56px;top:650.95px;font-size:14px;line-height:14px;color:#000;transform:scaleX(1.0400);transform-origin:right;">49,388.64</div>
<div style="left:1488.32px;top:650.95px;font-size:14px;line-height:14px;color:#000;transform:scaleX(1.0400);transform-origin:right;">4,115.72</div>
<div style="left:1592.82px;top:650.95px;font-size:14px;line-height:14px;color:#000;transform:scaleX(1.0400);transform-origin:right;">4,115.72</div>
<div style="left:1698.12px;top:650.95px;font-size:14px;line-height:14px;color:#000;transform:scaleX(1.0400);transform-origin:right;">4,115.72</div>
<div style="left:1802.62px;top:650.95px;font-size:14px;line-height:14px;color:#000;transform:scaleX(1.0400);transform-origin:right;">4,115.72</div>
<div style="left:519px;top:668px;width:145px;height:18px;background:#f2f7fe;"></div>
<div style="left:827px;top:668px;width:161px;height:18px;background:#f2f7fe;"></div>
<div style="left:36.57px;top:669.95px;font-size:14px;line-height:14px;color:#000;transform:scaleX(1.0400);transform-origin:left;">2111</div>
<div style="left:228.03px;top:669.95px;font-size:14px;line-height:14px;color:#000;transform:scaleX(1.0440);transform-origin:left;">Resale Items (Interim)</div>
<div style="left:449.21px;top:669.95px;font-size:14px;line-height:14px;color:#000;transform:scaleX(1.0400);transform-origin:right;">19,618.40</div>
<div style="left:670.27px;top:669.95px;font-size:14px;line-height:14px;color:#000;font-weight:bold;transform:scaleX(1.0200);transform-origin:left;">Pending</div>
<div style="left:995.07px;top:669.95px;font-size:14px;line-height:14px;color:#000;font-weight:bold;transform:scaleX(1.0200);transform-origin:left;">Equal Allocation</div>
<div style="left:1228.91px;top:669.95px;font-size:14px;line-height:14px;color:#000;transform:scaleX(1.0400);transform-origin:right;">19,618.40</div>
<div style="left:1378.56px;top:669.95px;font-size:14px;line-height:14px;color:#000;transform:scaleX(1.0400);transform-origin:right;">19,618.44</div>
<div style="left:1487.27px;top:669.95px;font-size:14px;line-height:14px;color:#000;transform:scaleX(1.0400);transform-origin:right;">1,634.87</div>
<div style="left:1591.77px;top:669.95px;font-size:14px;line-height:14px;color:#000;transform:scaleX(1.0400);transform-origin:right;">1,634.87</div>
<div style="left:1697.07px;top:669.95px;font-size:14px;line-height:14px;color:#000;transform:scaleX(1.0400);transform-origin:right;">1,634.87</div>
<div style="left:1801.57px;top:669.95px;font-size:14px;line-height:14px;color:#000;transform:scaleX(1.0400);transform-origin:right;">1,634.87</div>
<div style="left:519px;top:687px;width:145px;height:18px;background:#f2f7fe;"></div>
<div style="left:827px;top:687px;width:161px;height:18px;background:#f2f7fe;"></div>
<div style="left:36.57px;top:688.95px;font-size:14px;line-height:14px;color:#000;transform:scaleX(1.0400);transform-origin:left;">2112</div>
<div style="left:228.50px;top:688.95px;font-size:14px;line-height:14px;color:#000;transform:scaleX(1.0041);transform-origin:left;">Cost of Resale Sold (In</div>
<div style="left:457.05px;top:688.95px;font-size:14px;line-height:14px;color:#000;transform:scaleX(1.0400);transform-origin:right;">5,692.20</div>
<div style="left:670.27px;top:688.95px;font-size:14px;line-height:14px;color:#000;font-weight:bold;transform:scaleX(1.0200);transform-origin:left;">Pending</div>
<div style="left:995.07px;top:688.95px;font-size:14px;line-height:14px;color:#000;font-weight:bold;transform:scaleX(1.0200);transform-origin:left;">Equal Allocation</div>
<div style="left:1236.75px;top:688.95px;font-size:14px;line-height:14px;color:#000;transform:scaleX(1.0400);transform-origin:right;">5,692.20</div>
<div style="left:1386.55px;top:688.95px;font-size:14px;line-height:14px;color:#000;transform:scaleX(1.0400);transform-origin:right;">5,692.20</div>
<div style="left:1498.74px;top:688.95px;font-size:14px;line-height:14px;color:#000;transform:scaleX(1.0400);transform-origin:right;">474.35</div>
<div style="left:1603.24px;top:688.95px;font-size:14px;line-height:14px;color:#000;transform:scaleX(1.0400);transform-origin:right;">474.35</div>
<div style="left:1708.54px;top:688.95px;font-size:14px;line-height:14px;color:#000;transform:scaleX(1.0400);transform-origin:right;">474.35</div>
<div style="left:1813.04px;top:688.95px;font-size:14px;line-height:14px;color:#000;transform:scaleX(1.0400);transform-origin:right;">474.35</div>
<div style="left:519px;top:706px;width:145px;height:18px;background:#f2f7fe;"></div>
<div style="left:827px;top:706px;width:161px;height:18px;background:#f2f7fe;"></div>
<div style="left:36.57px;top:707.95px;font-size:14px;line-height:14px;color:#000;transform:scaleX(1.0400);transform-origin:left;">2120</div>
<div style="left:228.04px;top:707.95px;font-size:14px;line-height:14px;color:#000;transform:scaleX(1.0326);transform-origin:left;">Finished Goods</div>
<div style="left:449.21px;top:707.95px;font-size:14px;line-height:14px;color:#000;transform:scaleX(1.0400);transform-origin:right;">28,013.50</div>
<div style="left:670.27px;top:707.95px;font-size:14px;line-height:14px;color:#000;font-weight:bold;transform:scaleX(1.0200);transform-origin:left;">Pending</div>
<div style="left:995.07px;top:707.95px;font-size:14px;line-height:14px;color:#000;font-weight:bold;transform:scaleX(1.0200);transform-origin:left;">Equal Allocation</div>
<div style="left:1228.91px;top:707.95px;font-size:14px;line-height:14px;color:#000;transform:scaleX(1.0400);transform-origin:right;">28,013.50</div>
<div style="left:1378.93px;top:707.95px;font-size:14px;line-height:14px;color:#000;transform:scaleX(1.0400);transform-origin:right;">28,013.52</div>
<div style="left:1487.12px;top:707.95px;font-size:14px;line-height:14px;color:#000;transform:scaleX(1.0400);transform-origin:right;">2,334.46</div>
<div style="left:1591.62px;top:707.95px;font-size:14px;line-height:14px;color:#000;transform:scaleX(1.0400);transform-origin:right;">2,334.46</div>
<div style="left:1696.92px;top:707.95px;font-size:14px;line-height:14px;color:#000;transform:scaleX(1.0400);transform-origin:right;">2,334.46</div>
<div style="left:1801.42px;top:707.95px;font-size:14px;line-height:14px;color:#000;transform:scaleX(1.0400);transform-origin:right;">2,334.46</div>
<svg style="left:1398px;top:20px" width="62" height="60" viewBox="0 0 62 60">
<defs><linearGradient id="gV" gradientUnits="userSpaceOnUse" x1="8" y1="8" x2="56" y2="17"><stop offset="0" stop-color="#34f59c"/><stop offset="0.25" stop-color="#48e8b0"/><stop offset="0.58" stop-color="#98a0f6"/><stop offset="1" stop-color="#2f5cff"/></linearGradient><linearGradient id="gL" gradientUnits="userSpaceOnUse" x1="6" y1="44" x2="55" y2="50"><stop offset="0" stop-color="#3558ff"/><stop offset="0.45" stop-color="#3ea8e6"/><stop offset="1" stop-color="#48eab0"/></linearGradient><linearGradient id="gBL" gradientUnits="userSpaceOnUse" x1="4.81" y1="15.24" x2="21.65" y2="29.67"><stop offset="0" stop-color="#80bcf8"/><stop offset="1" stop-color="#4a62a8"/></linearGradient><linearGradient id="gBTR" gradientUnits="userSpaceOnUse" x1="46.51" y1="6.01" x2="34.48" y2="18.44"><stop offset="0" stop-color="#80bcf8"/><stop offset="1" stop-color="#4a62a8"/></linearGradient><linearGradient id="gBR" gradientUnits="userSpaceOnUse" x1="57.10" y1="43.30" x2="40.26" y2="28.87"><stop offset="0" stop-color="#80bcf8"/><stop offset="1" stop-color="#4a62a8"/></linearGradient><linearGradient id="gBB" gradientUnits="userSpaceOnUse" x1="15.40" y1="52.53" x2="27.43" y2="40.10"><stop offset="0" stop-color="#80bcf8"/><stop offset="1" stop-color="#4a62a8"/></linearGradient></defs>
<g stroke-linejoin="round" stroke-width="3" transform="translate(30.95,29.27) scale(0.96) translate(-30.95,-29.27)">
<polygon points="3.13,17.00 8.02,12.91 25.66,27.67 18.44,32.88" fill="url(#gBL)" stroke="url(#gBL)"/><polygon points="30.47,15.24 43.70,3.61 49.72,8.66 37.69,21.25" fill="url(#gBTR)" stroke="url(#gBTR)"/><polygon points="58.78,41.54 53.89,45.63 36.25,30.87 43.46,25.66" fill="url(#gBR)" stroke="url(#gBR)"/><polygon points="31.44,43.30 18.20,54.93 12.19,49.88 24.22,37.29" fill="url(#gBB)" stroke="url(#gBB)"/>
<polygon points="56.13,45.07 44.67,54.93 23.42,37.85 13.15,49.08 3.77,41.06 25.42,22.29" fill="url(#gL)" stroke="url(#gL)"/>
<polygon points="5.77,13.47 17.24,3.61 38.49,20.69 48.76,9.46 58.14,17.48 36.49,36.25" fill="url(#gV)" stroke="url(#gV)"/>
</g>
</svg>
<svg style="left:1465px;top:25px" width="160" height="50" viewBox="0 0 160 50">
<g fill="#232f5e">
<path d="M4.1,6.35 L13.4,6.35 L23.7,32.8 L32.7,11.2 Q34.6,6.35 38.8,6.35 L43.1,6.35 L28.7,43.8 L18.4,43.8 Z"/>
<circle cx="53.6" cy="30.3" r="14.2"/>
<rect x="71.2" y="5" width="7.8" height="38.8"/>
<rect x="84" y="17" width="8" height="26.8"/>
<circle cx="88" cy="9" r="4.8"/>
<polygon points="94.4,17 103.8,17 108.4,25.1 113.1,17 122.8,17 114.4,30.1 123.1,43.8 113.4,43.8 108.4,35.8 103.4,43.8 94.2,43.8 103.1,30.1"/>
<path fill-rule="evenodd" d="M122.5,30.3 A14.7,14.2 0 1,1 151.9,30.3 A14.7,14.2 0 1,1 122.5,30.3 Z M130.85,30.3 A6.35,6.85 0 1,0 143.55,30.3 A6.35,6.85 0 1,0 130.85,30.3 Z"/>
</g>
<g fill="#ffffff">
<path d="M48.1,27.4 A5.55,4.6 0 0,1 59.2,27.4 Z"/>
<path d="M48.1,32.8 L69,32.8 L68.6,37.3 L60.2,34.6 Q57.5,37.8 53.8,37.8 Q49.8,37.8 48.1,32.8 Z"/>
</g>
</svg>
<div style="left:0px;top:0px;width:1858px;height:20px;background:#f0f0f0;"></div><div style="left:37px;top:0px;width:189px;height:20px;background:#e1e1e1;"></div><div style="left:226px;top:0px;width:1px;height:20px;background:#dadada;"></div><div style="left:372px;top:0px;width:1px;height:20px;background:#dadada;"></div><div style="left:518px;top:0px;width:1px;height:20px;background:#dadada;"></div><div style="left:664px;top:0px;width:1px;height:20px;background:#dadada;"></div><div style="left:826px;top:0px;width:1px;height:20px;background:#dadada;"></div><div style="left:988px;top:0px;width:1px;height:20px;background:#dadada;"></div><div style="left:1198px;top:0px;width:1px;height:20px;background:#dadada;"></div><div style="left:1297px;top:0px;width:1px;height:20px;background:#dadada;"></div><div style="left:1447px;top:0px;width:1px;height:20px;background:#dadada;"></div><div style="left:1547px;top:0px;width:1px;height:20px;background:#dadada;"></div><div style="left:1652px;top:0px;width:1px;height:20px;background:#dadada;"></div><div style="left:1757px;top:0px;width:1px;height:20px;background:#dadada;"></div><div style="left:1858px;top:0px;width:1px;height:20px;background:#dadada;"></div><div style="left:36px;top:0px;width:1px;height:19px;background:#b8b8b8;"></div><div style="left:35px;top:20px;width:1823px;height:1px;background:#b4b4b4;"></div><div style="left:19px;top:4.5px;width:0;height:0;border-bottom:12.3px solid #dcdcdc;border-left:12.3px solid transparent"></div><div style="left:0px;top:20px;width:35px;height:698px;background:#f0f0f0;"></div><div style="left:34px;top:21px;width:1px;height:697px;background:#b4b4b4;"></div><div style="left:1px;top:20px;width:32px;height:2px;background:#e4e4e4;"></div><div style="left:1px;top:22px;width:32px;height:1px;background:#b8b8b8;"></div><div style="left:1px;top:23px;width:33px;height:28px;background:#e1e1e1;"></div><div style="left:1px;top:64px;width:33px;height:1px;background:#dcdcdc;"></div><div style="left:1px;top:83px;width:33px;height:1px;background:#dcdcdc;"></div><div style="left:1px;top:102px;width:33px;height:1px;background:#dcdcdc;"></div><div style="left:1px;top:121px;width:33px;height:1px;background:#dcdcdc;"></div><div style="left:1px;top:140px;width:33px;height:1px;background:#dcdcdc;"></div><div style="left:1px;top:159px;width:33px;height:1px;background:#dcdcdc;"></div><div style="left:1px;top:178px;width:33px;height:1px;background:#dcdcdc;"></div><div style="left:1px;top:197px;width:33px;height:1px;background:#dcdcdc;"></div><div style="left:1px;top:216px;width:33px;height:1px;background:#dcdcdc;"></div><div style="left:1px;top:235px;width:33px;height:1px;background:#dcdcdc;"></div><div style="left:1px;top:256px;width:33px;height:1px;background:#dcdcdc;"></div><div style="left:1px;top:277px;width:33px;height:1px;background:#dcdcdc;"></div><div style="left:1px;top:298px;width:33px;height:1px;background:#dcdcdc;"></div><div style="left:1px;top:317px;width:33px;height:1px;background:#dcdcdc;"></div><div style="left:1px;top:336px;width:33px;height:1px;background:#dcdcdc;"></div><div style="left:1px;top:355px;width:33px;height:1px;background:#dcdcdc;"></div><div style="left:1px;top:376px;width:33px;height:1px;background:#dcdcdc;"></div><div style="left:1px;top:397px;width:33px;height:1px;background:#dcdcdc;"></div><div style="left:1px;top:418px;width:33px;height:1px;background:#dcdcdc;"></div><div style="left:1px;top:437px;width:33px;height:1px;background:#dcdcdc;"></div><div style="left:1px;top:458px;width:33px;height:1px;background:#dcdcdc;"></div><div style="left:1px;top:496px;width:33px;height:1px;background:#dcdcdc;"></div><div style="left:1px;top:515px;width:33px;height:1px;background:#dcdcdc;"></div><div style="left:1px;top:534px;width:33px;height:1px;background:#dcdcdc;"></div><div style="left:1px;top:553px;width:33px;height:1px;background:#dcdcdc;"></div><div style="left:1px;top:572px;width:33px;height:1px;background:#dcdcdc;"></div><div style="left:1px;top:591px;width:33px;height:1px;background:#dcdcdc;"></div><div style="left:1px;top:610px;width:33px;height:1px;background:#dcdcdc;"></div><div style="left:1px;top:629px;width:33px;height:1px;background:#dcdcdc;"></div><div style="left:1px;top:648px;width:33px;height:1px;background:#dcdcdc;"></div><div style="left:1px;top:667px;width:33px;height:1px;background:#dcdcdc;"></div><div style="left:1px;top:686px;width:33px;height:1px;background:#dcdcdc;"></div><div style="left:1px;top:705px;width:33px;height:1px;background:#dcdcdc;"></div><div style="left:1px;top:724px;width:33px;height:1px;background:#dcdcdc;"></div><div style="left:1px;top:51px;width:33px;height:1px;background:#d0d0d0;"></div><div style="left:125.77px;top:2.98px;font-size:15.5px;line-height:15.5px;color:#1e7145">F</div><div style="left:293.47px;top:2.98px;font-size:15.5px;line-height:15.5px;color:#3b3b3b">G</div><div style="left:439.90px;top:2.98px;font-size:15.5px;line-height:15.5px;color:#3b3b3b">H</div><div style="left:589.35px;top:2.98px;font-size:15.5px;line-height:15.5px;color:#3b3b3b">I</div><div style="left:741.62px;top:2.98px;font-size:15.5px;line-height:15.5px;color:#3b3b3b">J</div><div style="left:902.33px;top:2.98px;font-size:15.5px;line-height:15.5px;color:#3b3b3b">K</div><div style="left:1089.19px;top:2.98px;font-size:15.5px;line-height:15.5px;color:#3b3b3b">L</div><div style="left:1241.54px;top:2.98px;font-size:15.5px;line-height:15.5px;color:#3b3b3b">M</div><div style="left:1366.90px;top:2.98px;font-size:15.5px;line-height:15.5px;color:#3b3b3b">N</div><div style="left:1491.47px;top:2.98px;font-size:15.5px;line-height:15.5px;color:#3b3b3b">O</div><div style="left:1594.83px;top:2.98px;font-size:15.5px;line-height:15.5px;color:#3b3b3b">P</div><div style="left:1698.97px;top:2.98px;font-size:15.5px;line-height:15.5px;color:#3b3b3b">Q</div><div style="left:1802.40px;top:2.98px;font-size:15.5px;line-height:15.5px;color:#3b3b3b">R</div><div style="left:13.47px;top:32.23px;font-size:14.5px;line-height:14.5px;color:#1e7145">6</div><div style="left:13.47px;top:45.73px;font-size:14.5px;line-height:14.5px;color:#3b3b3b;clip-path:inset(6.27px 0 0 0)">7</div><div style="left:13.47px;top:67.13px;font-size:14.5px;line-height:14.5px;color:#3b3b3b">8</div><div style="left:13.47px;top:86.13px;font-size:14.5px;line-height:14.5px;color:#3b3b3b">9</div><div style="left:9.44px;top:105.13px;font-size:14.5px;line-height:14.5px;color:#3b3b3b">10</div><div style="left:9.97px;top:124.13px;font-size:14.5px;line-height:14.5px;color:#3b3b3b">11</div><div style="left:9.44px;top:143.13px;font-size:14.5px;line-height:14.5px;color:#3b3b3b">12</div><div style="left:9.44px;top:162.13px;font-size:14.5px;line-height:14.5px;color:#3b3b3b">13</div><div style="left:9.44px;top:181.13px;font-size:14.5px;line-height:14.5px;color:#3b3b3b">14</div><div style="left:9.44px;top:200.13px;font-size:14.5px;line-height:14.5px;color:#3b3b3b">15</div><div style="left:9.44px;top:219.13px;font-size:14.5px;line-height:14.5px;color:#3b3b3b">16</div><div style="left:9.44px;top:240.13px;font-size:14.5px;line-height:14.5px;color:#3b3b3b">17</div><div style="left:9.44px;top:261.13px;font-size:14.5px;line-height:14.5px;color:#3b3b3b">18</div><div style="left:9.44px;top:282.13px;font-size:14.5px;line-height:14.5px;color:#3b3b3b">19</div><div style="left:9.44px;top:301.13px;font-size:14.5px;line-height:14.5px;color:#3b3b3b">20</div><div style="left:9.44px;top:320.13px;font-size:14.5px;line-height:14.5px;color:#3b3b3b">21</div><div style="left:9.44px;top:339.13px;font-size:14.5px;line-height:14.5px;color:#3b3b3b">22</div><div style="left:9.44px;top:360.13px;font-size:14.5px;line-height:14.5px;color:#3b3b3b">23</div><div style="left:9.44px;top:381.13px;font-size:14.5px;line-height:14.5px;color:#3b3b3b">24</div><div style="left:9.44px;top:402.13px;font-size:14.5px;line-height:14.5px;color:#3b3b3b">25</div><div style="left:9.44px;top:421.13px;font-size:14.5px;line-height:14.5px;color:#3b3b3b">26</div><div style="left:9.44px;top:442.13px;font-size:14.5px;line-height:14.5px;color:#3b3b3b">27</div><div style="left:9.44px;top:480.13px;font-size:14.5px;line-height:14.5px;color:#3b3b3b">28</div><div style="left:9.44px;top:499.13px;font-size:14.5px;line-height:14.5px;color:#3b3b3b">29</div><div style="left:9.44px;top:518.13px;font-size:14.5px;line-height:14.5px;color:#3b3b3b">30</div><div style="left:9.44px;top:537.13px;font-size:14.5px;line-height:14.5px;color:#3b3b3b">31</div><div style="left:9.44px;top:556.13px;font-size:14.5px;line-height:14.5px;color:#3b3b3b">32</div><div style="left:9.44px;top:575.13px;font-size:14.5px;line-height:14.5px;color:#3b3b3b">33</div><div style="left:9.44px;top:594.13px;font-size:14.5px;line-height:14.5px;color:#3b3b3b">34</div><div style="left:9.44px;top:613.13px;font-size:14.5px;line-height:14.5px;color:#3b3b3b">35</div><div style="left:9.44px;top:632.13px;font-size:14.5px;line-height:14.5px;color:#3b3b3b">36</div><div style="left:9.44px;top:651.13px;font-size:14.5px;line-height:14.5px;color:#3b3b3b">37</div><div style="left:9.44px;top:670.13px;font-size:14.5px;line-height:14.5px;color:#3b3b3b">38</div><div style="left:9.44px;top:689.13px;font-size:14.5px;line-height:14.5px;color:#3b3b3b">39</div><div style="left:9.44px;top:708.13px;font-size:14.5px;line-height:14.5px;color:#3b3b3b">40</div><div style="left:35px;top:19px;width:191px;height:2px;background:#1e7145;"></div><div style="left:33px;top:19px;width:191px;height:30px;border:2px solid #1e6e42;"></div><div style="left:223px;top:48px;width:5px;height:5px;background:#1e6e42;border:1px solid #fff"></div><div style="left:17px;top:218px;width:1562px;height:251px;border:5px solid #e61a1a;"></div><div style="left:1858px;top:0px;width:21px;height:718px;background:#e6e6ea;"></div><div style="left:1861px;top:-10px;width:17px;height:730px;background:#f3f3f3;border-radius:0 0 9px 9px"></div><div style="left:1865px;top:-10px;width:9px;height:50px;background:#737373;border-radius:5px"></div><svg style="left:1860px;top:705px" width="20" height="16" viewBox="0 0 20 16"><polygon points="5.6,4.6 13.4,4.6 9.5,10.6" fill="#737373" stroke="#737373" stroke-width="1.3" stroke-linejoin="round"/></svg><div style="left:0px;top:718px;width:76px;height:30px;background:#e6e6ea;border-top-right-radius:5px;"></div><div style="left:206px;top:718px;width:1673px;height:30px;background:#e6e6ea;border-top-left-radius:5px;"></div><div style="left:70px;top:740px;width:142px;height:8px;background:#e6e6ea;"></div><div style="left:76px;top:718px;width:130px;height:28px;background:#ffffff;border-radius:0 0 6px 6px"></div><div style="left:77px;top:721px;width:128px;height:24px;background:linear-gradient(#ffffff,#aabef8);border-radius:0 0 5px 5px"></div><div style="left:84px;top:741px;width:114px;height:2px;background:#107c41"></div><svg style="left:18px;top:726px" width="14" height="16" viewBox="0 0 14 16"><polyline points="3.5,3 8.5,7.8 3.5,12.6" fill="none" stroke="#707070" stroke-width="1.2"/></svg><div style="left:215px;top:722px;width:66px;height:24px;background:#808080;border-radius:5px"></div><div style="left:290px;top:722px;width:92px;height:24px;background:#808080;border-radius:5px"></div><div style="left:210px;top:725px;width:1px;height:17px;background:#c8c8c8;"></div><div style="left:285px;top:725px;width:1px;height:17px;background:#c8c8c8;"></div><div style="left:386px;top:725px;width:1px;height:17px;background:#c8c8c8;"></div><div style="left:83.12px;top:724.70px;font-size:13px;line-height:13px;color:#242424;font-weight:bold;transform:scaleX(1.0421);transform-origin:left">Budget Writeback</div><div style="left:223.55px;top:727.44px;font-size:13.3px;line-height:13.3px;color:#ffffff;font-weight:normal;transform:scaleX(1.0815);transform-origin:left">Options</div><div style="left:298.96px;top:727.44px;font-size:13.3px;line-height:13.3px;color:#ffffff;font-weight:normal;transform:scaleX(1.1173);transform-origin:left">Information</div><div style="left:429px;top:732.8px;width:11px;height:1.3px;background:#404040"></div><div style="left:433.9px;top:728px;width:1.3px;height:11px;background:#404040"></div><div style="left:1114px;top:730px;width:2px;height:2px;background:#303030;"></div><div style="left:1114px;top:734px;width:2px;height:2px;background:#303030;"></div><div style="left:1114px;top:738px;width:2px;height:2px;background:#303030;"></div><div style="left:1131px;top:725px;width:730px;height:17px;background:#f3f3f3;border-radius:9px"></div><div style="left:1148px;top:729px;width:311px;height:9px;background:#737373;border-radius:5px"></div><svg style="left:1130px;top:725px" width="20" height="18" viewBox="0 0 20 18"><polygon points="6.6,8.5 12.4,4.6 12.4,12.4" fill="#737373" stroke="#737373" stroke-width="1.3" stroke-linejoin="round"/></svg><svg style="left:1845px;top:725px" width="20" height="18" viewBox="0 0 20 18"><polygon points="5.2,4.6 5.2,12.4 11,8.5" fill="#737373" stroke="#737373" stroke-width="1.3" stroke-linejoin="round"/></svg>
</body></html>
